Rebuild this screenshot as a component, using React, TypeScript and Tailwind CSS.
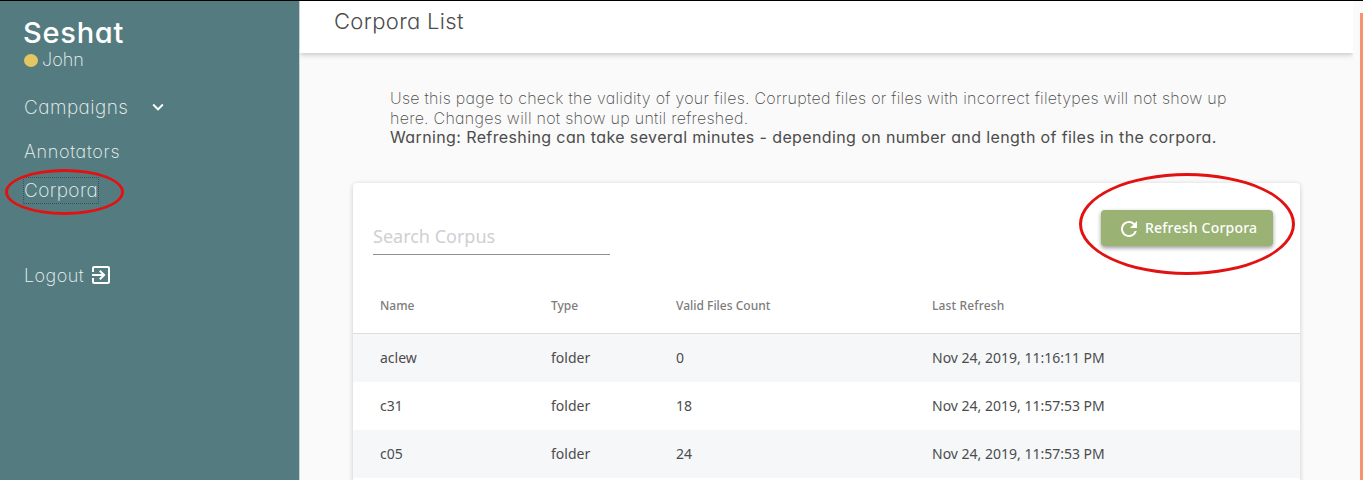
import type { ReactNode } from "react";
import { MdExitToApp, MdExpandMore, MdRefresh } from "react-icons/md";

const rows = [
  { name: "aclew", type: "folder", count: 0, refreshed: "Nov 24, 2019, 11:16:11 PM" },
  { name: "c31", type: "folder", count: 18, refreshed: "Nov 24, 2019, 11:57:53 PM" },
  { name: "c05", type: "folder", count: 24, refreshed: "Nov 24, 2019, 11:57:53 PM" },
];

const columns = "grid grid-cols-[171px_125px_256px_1fr] items-center pl-[27px]";

function Ring({ className, children }: { className: string; children?: ReactNode }) {
  return (
    <span className={`pointer-events-none absolute rounded-[50%] border-3 border-[#e21212] ${className}`}>
      {children}
    </span>
  );
}

function Sidebar() {
  return (
    <aside className="w-[300px] shrink-0 border-r border-[#c9d3d4] bg-[#547c80] pl-6 text-[18px] font-extralight text-[#eef3f3]">
      <h1 className="mt-[14px] -ml-px h-[36px] text-[29px] leading-[36px] font-medium tracking-[0.75px] text-white">
        <span>Seshat</span>
      </h1>
      <div className="flex h-[18px] items-center gap-1">
        <i className="h-[13px] w-[14px] rounded-[50%] bg-[#e4c662]" />
        <span className="-mt-[2px]">John</span>
      </div>
      <nav className="mt-[27px] flex flex-col items-start">
        <div className="flex h-6 items-center">
          <span className="w-[123px] pt-px text-[19px] tracking-[0.45px]">Campaigns</span>
          <MdExpandMore className="-mt-[3px] size-[22px] text-white" />
        </div>
        <div className="mt-5 h-6 leading-6 tracking-[0.68px]"><span>Annotators</span></div>
        <div className="relative mt-[13px] -ml-px h-[27px] w-[76px] border border-dotted border-[#3c5356] text-[19px] leading-[26px] tracking-[0.4px]">
          <span>Corpora</span>
          <Ring className="-top-[9px] -left-[19px] h-[46px] w-[119px]" />
        </div>
        <div className="mt-[59px] flex h-6 items-center">
          <span className="w-[65px] tracking-[0.45px]">Logout</span>
          <MdExitToApp className="size-6 text-white" />
        </div>
      </nav>
    </aside>
  );
}

function CorporaCard() {
  return (
    <section className="mt-[35px] ml-[53px] h-[400px] w-[947px] rounded-t bg-white font-['Noto_Sans',sans-serif] shadow-[0_1px_5px_rgba(0,0,0,0.2)]">
      <div className="flex h-[95px] justify-between pr-[27px] pl-5">
        <div className="mt-[35px] h-[37px] w-[237px] border-b border-[#8f8f8f] text-[18px] leading-[36px] text-[#cfcfd2]">
          <span>Search Corpus</span>
        </div>
        <div className="relative mt-[27px] h-9 w-[172px]">
          <button className="flex h-9 w-[172px] items-center rounded bg-[#9ab273] pl-4 text-[14px] font-medium text-white shadow-[0_2px_4px_rgba(0,0,0,0.4)]">
            <MdRefresh className="mt-[2px] mr-1 size-6" />
            <span className="-mt-[2px] tracking-[0.22px]">Refresh Corpora</span>
          </button>
          <Ring className="-top-[37px] -left-[22px] h-[102px] w-[216px]" />
        </div>
      </div>
      <div className={`${columns} h-[56px] border-b border-[#dedede] text-[12px] font-medium text-[#7c7c7c]`}>
        <span>Name</span>
        <span>Type</span>
        <span>Valid Files Count</span>
        <span className="tracking-[0.15px]">Last Refresh</span>
      </div>
      {rows.map((row, i) => (
        <div key={i} className={`${columns} h-12 pb-[2px] text-[14px] text-[#4c4c4c] ${i % 2 ? "bg-white" : "bg-[#f6f7f9]"}`}>
          <span>{row.name}</span>
          <span>{row.type}</span>
          <span>{row.count}</span>
          <span>{row.refreshed}</span>
        </div>
      ))}
    </section>
  );
}

export default function App() {
  return (
    <div className="flex h-[480px] w-[1363px] overflow-hidden border-t border-black bg-[#fafafa] font-['Inter',sans-serif] [font-feature-settings:'cv11']">
      <Sidebar />
      <main className="w-[1053px] overflow-hidden">
        <header className="h-[52px] bg-white pl-[34px] text-[22px] leading-[41px] font-light tracking-[0.33px] text-[#4c4c4c] shadow-[0_2px_5px_rgba(0,0,0,0.2)]">
          <span>Corpora List</span>
        </header>
        <div className="mt-[36px] ml-[90px] h-[59px] text-[16px] leading-[19.5px] font-extralight tracking-[0.275px] whitespace-nowrap text-[#4c4c4c]">
          <p><span>Use this page to check the validity of your files. Corrupted files or files with incorrect filetypes will not show up</span></p>
          <p><span>here. Changes will not show up until refreshed.</span></p>
          <p className="font-normal tracking-[0.385px]"><span>Warning: Refreshing can take several minutes - depending on number and length of files in the corpora.</span></p>
        </div>
        <CorporaCard />
      </main>
      <div className="mt-3 ml-auto w-[3px] bg-[#f6946f]" />
    </div>
  );
}
